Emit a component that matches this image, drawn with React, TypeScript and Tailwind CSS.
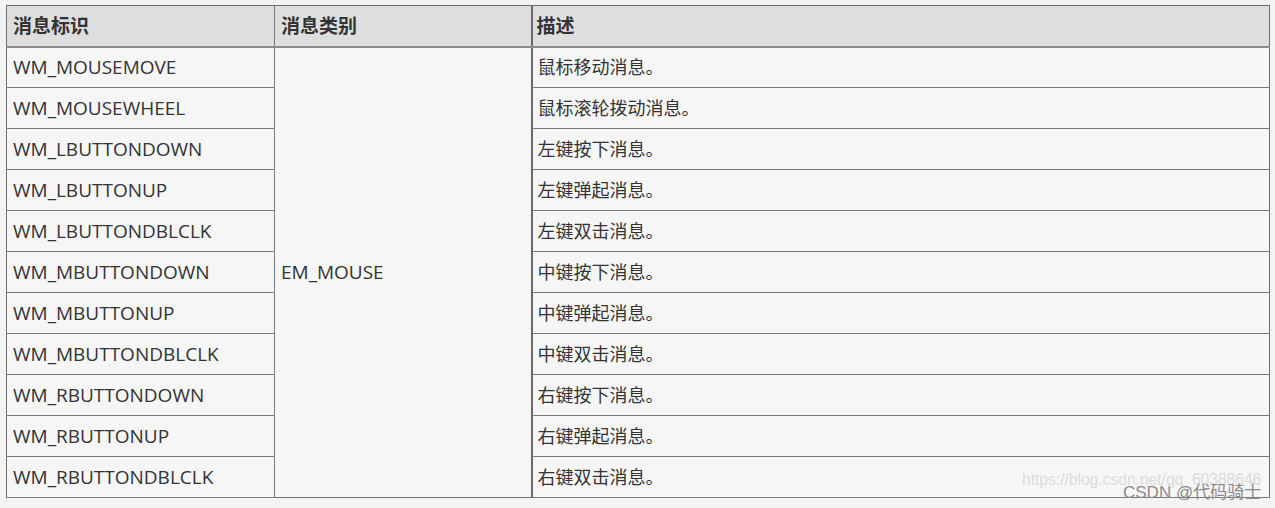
const rows: [string, string][] = [
  ['WM_MOUSEMOVE', '鼠标移动消息。'],
  ['WM_MOUSEWHEEL', '鼠标滚轮拨动消息。'],
  ['WM_LBUTTONDOWN', '左键按下消息。'],
  ['WM_LBUTTONUP', '左键弹起消息。'],
  ['WM_LBUTTONDBLCLK', '左键双击消息。'],
  ['WM_MBUTTONDOWN', '中键按下消息。'],
  ['WM_MBUTTONUP', '中键弹起消息。'],
  ['WM_MBUTTONDBLCLK', '中键双击消息。'],
  ['WM_RBUTTONDOWN', '右键按下消息。'],
  ['WM_RBUTTONUP', '右键弹起消息。'],
  ['WM_RBUTTONDBLCLK', '右键双击消息。'],
];

export default function App() {
  return (
    <div
      className="relative h-[508px] w-[1275px] bg-[#f3f3f4] pl-[6px] pt-[5px] text-[#333]"
      style={{ fontFamily: '"Open Sans", "Noto Sans CJK SC", sans-serif' }}
    >
      <table className="w-[1264px] table-fixed border-collapse border border-[#6e6e6e] bg-[#f6f6f6] text-[18px]">
        <colgroup>
          <col className="w-[268px]" />
          <col className="w-[257px]" />
          <col />
        </colgroup>
        <thead>
          <tr className="h-[41px] bg-[#dedede] text-[19px] font-bold">
            <th className="border-r border-b-2 border-[#8a8a8a] border-r-[#7a7a7a] px-[6px] text-left">消息标识</th>
            <th className="border-r-2 border-b-2 border-[#8a8a8a] border-r-[#6a6a6a] px-[6px] text-left">消息类别</th>
            <th className="border-b-2 border-[#8a8a8a] px-[4px] text-left">描述</th>
          </tr>
        </thead>
        <tbody>
          {rows.map(([id, desc], i) => (
            <tr key={id} className="h-[41px]">
              <td className="border-r border-b border-[#7a7a7a] px-[6px] text-[19px]">{id}</td>
              {i === 0 && (
                <td rowSpan={rows.length} className="border-r-2 border-[#6a6a6a] px-[6px] text-[19px]">
                  EM_MOUSE
                </td>
              )}
              <td className="border-b border-[#7a7a7a] px-[5px] text-[18px]">{desc}</td>
            </tr>
          ))}
        </tbody>
      </table>

      <div className="pointer-events-none absolute left-[1022px] top-[468px] text-[15.6px] text-[#dcdcdc]" style={{ fontFamily: '"Liberation Sans", sans-serif' }}>
        https://blog.csdn.net/qq_60388646
      </div>
      <div className="pointer-events-none absolute left-[1123px] top-[480px] text-[17px] text-[#8a8a8a]" style={{ fontFamily: '"Liberation Sans", "Noto Sans CJK SC", sans-serif' }}>
        CSDN @代码骑士
      </div>
    </div>
  );
}
